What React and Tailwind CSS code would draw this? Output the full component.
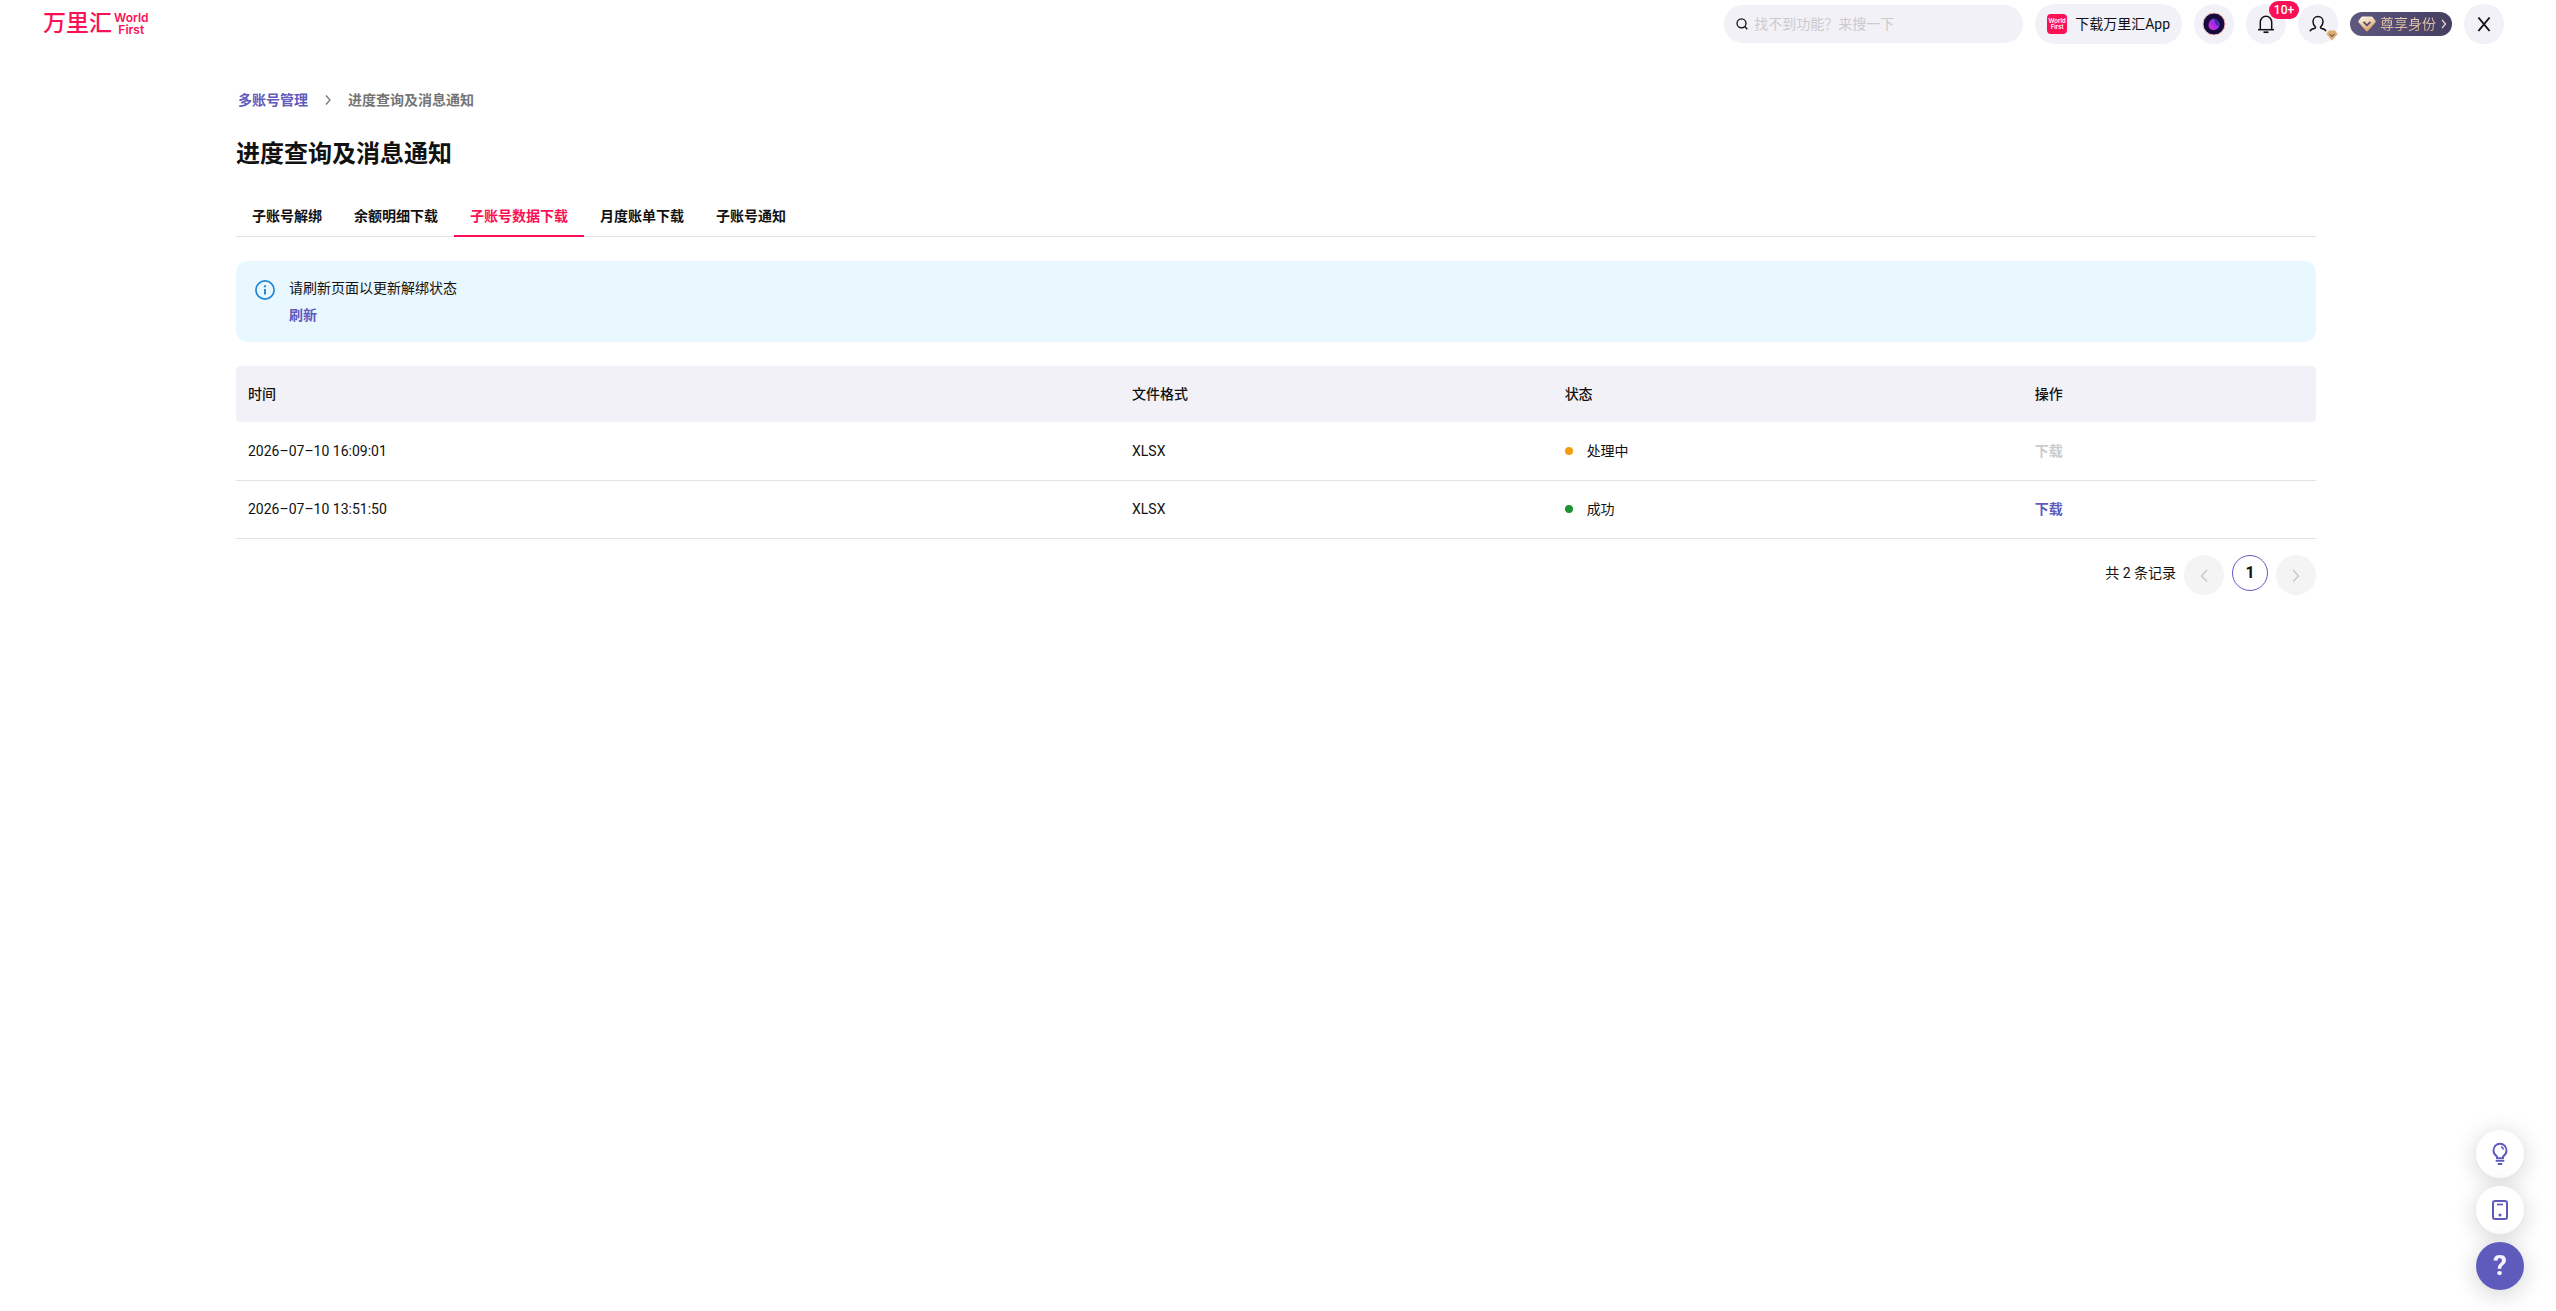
import { useState } from 'react'

const tabs = ['子账号解绑', '余额明细下载', '子账号数据下载', '月度账单下载', '子账号通知']

const records = [
  { time: '2026–07–10 16:09:01', format: 'XLSX', status: '处理中', dot: 'bg-[#f29d12]', ready: false },
  { time: '2026–07–10 13:51:50', format: 'XLSX', status: '成功', dot: 'bg-[#1d9432]', ready: true },
]

function Gem({ className }) {
  return (
    <svg viewBox="0 0 18 16" className={className} aria-hidden="true">
      <defs>
        <linearGradient id="gem" x1="0" y1="0" x2="0.4" y2="1">
          <stop offset="0" stopColor="#fffaf3" />
          <stop offset="0.5" stopColor="#f0d3ae" />
          <stop offset="1" stopColor="#d9a063" />
        </linearGradient>
      </defs>
      <path d="M4.6 .5h8.8c.5 0 .9.2 1.2.6l2.8 3.7c.4.6.4 1.3-.1 1.8l-7.4 8.5c-.5.5-1.3.5-1.8 0L.7 6.6C.2 6.1.2 5.400.6 4.800L3.400 1.100C3.700.7 4.100.5 4.600.5Z" fill="url(#gem)" />
      <path d="M5.500 5.800 9 9.300l3.500-3.500" fill="none" stroke="#504a70" strokeWidth="1.700" />
    </svg>
  )
}

function GoldGem({ className }) {
  return (
    <svg viewBox="0 0 12 11" className={className} aria-hidden="true">
      <path d="M3 .5h6L11.700 4 6 10.500.3 4 3 .5Z" fill="#dfae73" />
      <path d="M3.500 4 6 6.500 8.500 4" fill="none" stroke="#7b6250" strokeWidth="1.100" />
    </svg>
  )
}

function Logo() {
  return (
    <a href="#" aria-label="万里汇 WorldFirst" className="flex items-center gap-0.5 text-[#fc1055]">
      <span className="text-[23px] leading-6 font-medium">万里汇</span>
      <span className="flex flex-col items-center font-['Inter'] text-xs leading-3 font-semibold">
        <span>World</span>
        <span>First</span>
      </span>
    </a>
  )
}

function Header() {
  return (
    <header className="flex h-12 items-center justify-between pl-[43px] pr-[52px]">
      <Logo />
      <div className="flex items-center gap-3">
        <label className="flex h-[38px] w-[299px] items-center gap-1.5 rounded-full bg-[#f2f1f7] px-3">
          <svg viewBox="0 0 12 12" className="size-3 shrink-0" fill="none" stroke="#111" strokeWidth="1.300" aria-hidden="true">
            <circle cx="5.500" cy="5.300" r="4.500" />
            <path d="m8.700 8.500 2.600 2.800" />
          </svg>
          <input
            type="text"
            aria-label="搜索"
            placeholder="找不到功能？来搜一下"
            className="w-full bg-transparent text-sm outline-none placeholder:text-[#cbcbcb]"
          />
        </label>
        <button className="flex h-10 items-center gap-2 rounded-full bg-[#f2f1f7] px-3">
          <span className="flex size-5 flex-col items-center justify-center rounded bg-[#fc1055] font-['Inter'] text-[6px] leading-[6px] font-semibold text-white">
            <span>World</span>
            <span>First</span>
          </span>
          <span className="text-sm">下载万里汇App</span>
        </button>
        <button aria-label="助手" className="flex size-10 items-center justify-center rounded-full bg-[#f2f1f7]">
          <svg viewBox="0 0 24 24" className="size-6" aria-hidden="true">
            <defs>
              <linearGradient id="orb" x1="0" y1="1" x2="1" y2="0">
                <stop offset="0" stopColor="#f032c8" />
                <stop offset="0.5" stopColor="#a02bea" />
                <stop offset="1" stopColor="#4468f5" />
              </linearGradient>
            </defs>
            <circle cx="12" cy="12" r="11" fill="#160a3c" stroke="#f5b7b4" strokeWidth="1" />
            <path d="M6.500 13c0-3.500 2-5.500 5-6.500 3 .5 6 3 6 6.500-.5 3-2.500 4.500-5.500 5-3.500 0-5.500-2-5.500-5Z" fill="url(#orb)" />
            <path d="M12 6.500c3 1 5 3.500 4.500 7.500-2 0-4-3-4.500-7.500Z" fill="#1c1250" opacity=".55" />
          </svg>
        </button>
        <button aria-label="消息" className="relative flex size-10 items-center justify-center rounded-full bg-[#f2f1f7]">
          <svg viewBox="0 0 20 20" className="size-5" fill="none" stroke="#111" strokeWidth="1.500" aria-hidden="true">
            <path d="M4.300 15.300V8.200C4.300 4.800 6.800 2.200 10 2.200s5.700 2.600 5.700 6v7.100" />
            <path d="M2 15.700h16" />
            <path d="M7.500 18.200h5" strokeWidth="1.700" />
          </svg>
          <span className="absolute -top-[3px] left-[23px] flex h-[18px] w-[30px] items-center justify-center rounded-full bg-[#fc1055] text-xs font-medium text-white">
            10+
          </span>
        </button>
        <button aria-label="账户" className="relative flex size-10 items-center justify-center rounded-full bg-[#f2f1f7]">
          <svg viewBox="0 0 20 20" className="size-5" fill="none" stroke="#111" strokeWidth="1.500" aria-hidden="true">
            <path d="M2 17.200c.8-2 2.300-2.500 4.500-2.700.9-.1 1.300-.8.900-1.500C5.900 11.600 5 10 5 7.700 5 4.700 7.100 2.500 10 2.500s5 2.200 5 5.200c0 2.300-.9 3.900-2.400 5.300-.4.700 0 1.400.9 1.500 2.200.2 3.700.7 4.500 2.700" />
          </svg>
          <GoldGem className="absolute right-0 bottom-[3px] h-[11px] w-3" />
        </button>
        <button className="flex h-6 items-center gap-1 rounded-full bg-linear-to-r from-[#5f587f] to-[#453e61] pr-1 pl-2">
          <Gem className="h-4 w-[18px]" />
          <span className="bg-linear-to-b from-[#f3dcc6] to-[#cfa888] bg-clip-text text-sm text-transparent">尊享身份</span>
          <svg viewBox="0 0 8 10" className="h-2.5 w-2" fill="none" stroke="#f5e6da" strokeWidth="1.200" aria-hidden="true">
            <path d="m2 .8 3.500 4.200L2 9.200" />
          </svg>
        </button>
        <button aria-label="关闭" className="flex size-10 items-center justify-center rounded-full bg-[#f2f1f7]">
          <svg viewBox="0 0 20 20" className="size-5" fill="none" stroke="#111" strokeWidth="1.900" aria-hidden="true">
            <path d="M4.400 3.500 15.600 17M15.600 3.500 4.400 17" />
          </svg>
        </button>
      </div>
    </header>
  )
}

function RecordTable() {
  return (
    <table className="mt-6 w-full table-fixed text-left text-sm">
      <colgroup>
        <col className="w-[42.5%]" />
        <col className="w-[20.8%]" />
        <col className="w-[22.6%]" />
        <col className="w-[14.1%]" />
      </colgroup>
      <thead>
        <tr className="h-14 bg-[#f2f1f7]">
          <th className="rounded-l px-3 font-medium">时间</th>
          <th className="px-3 font-medium">文件格式</th>
          <th className="px-3 font-medium">状态</th>
          <th className="rounded-r px-3 font-medium">操作</th>
        </tr>
      </thead>
      <tbody>
        {records.map(r => (
          <tr key={r.time} className="h-[58px] border-b border-[#e3e3e5]">
            <td className="px-3">{r.time}</td>
            <td className="px-3">{r.format}</td>
            <td className="px-3">
              <span className="flex items-center gap-3.5">
                <span className={`size-2 rounded-full ${r.dot}`} />
                {r.status}
              </span>
            </td>
            <td className="px-3">
              <button disabled={!r.ready} className="font-bold text-[#5f5bbd] disabled:text-[#cbcbcb]">
                下载
              </button>
            </td>
          </tr>
        ))}
      </tbody>
    </table>
  )
}

function Pagination() {
  return (
    <nav aria-label="分页" className="mt-4 flex items-start justify-end gap-2 text-sm">
      <span className="leading-9">共 2 条记录</span>
      <button disabled aria-label="上一页" className="flex size-10 items-center justify-center rounded-full bg-[#f4f4f4]">
        <svg viewBox="0 0 12 14" className="h-3.5 w-3" fill="none" stroke="#c8c8c8" strokeWidth="1.500" aria-hidden="true">
          <path d="M9 2 3.500 8 9 13.500" />
        </svg>
      </button>
      <button aria-current="page" className="size-9 rounded-full border border-[#5f5bbd] text-base font-bold">1</button>
      <button disabled aria-label="下一页" className="flex size-10 items-center justify-center rounded-full bg-[#f4f4f4]">
        <svg viewBox="0 0 12 14" className="h-3.5 w-3" fill="none" stroke="#c8c8c8" strokeWidth="1.500" aria-hidden="true">
          <path d="m3 2 5.500 6L3 13.500" />
        </svg>
      </button>
    </nav>
  )
}

function FloatingTools() {
  return (
    <div className="fixed right-8 bottom-[21px] flex flex-col gap-2">
      <button aria-label="建议" className="flex size-12 items-center justify-center rounded-full bg-white shadow-[0_4px_24px_rgba(0,0,0,0.18)]">
        <svg viewBox="0 0 24 24" className="size-6" fill="none" stroke="#5f5bbd" strokeWidth="1.900" aria-hidden="true">
          <path d="M9 16.200v-1.700c-2-1.300-3.500-3.300-3.500-6C5.500 4.500 8.300 1.700 12 1.700s6.500 2.800 6.500 6.800c0 2.700-1.500 4.700-3.500 6v1.700Z" />
          <path d="M13 4.800c1.500.4 2.300 1.400 2.500 2.900" strokeWidth="1.500" />
          <path d="M7.700 18.900h8.600M9.800 22h4.400" />
        </svg>
      </button>
      <button aria-label="手机版" className="flex size-12 items-center justify-center rounded-full bg-white shadow-[0_4px_24px_rgba(0,0,0,0.18)]">
        <svg viewBox="0 0 24 24" className="size-6" fill="none" stroke="#5f5bbd" strokeWidth="2" aria-hidden="true">
          <rect x="5" y="3" width="14" height="18" rx="2" />
          <path d="M9 6.500h6" strokeWidth="1.700" />
          <circle cx="12" cy="17" r="1.500" fill="#5f5bbd" stroke="none" />
        </svg>
      </button>
      <button aria-label="帮助" className="flex size-12 items-center justify-center rounded-full bg-[#5f5bbd] text-[28px] font-bold text-[#f5f4ff] shadow-[0_4px_24px_rgba(0,0,0,0.18)]">
        ?
      </button>
    </div>
  )
}

export default function App() {
  const [active, setActive] = useState(2)

  return (
    <div className="min-h-screen bg-white font-['Roboto','Noto_Sans_CJK_SC',sans-serif] text-[#111]">
      <Header />
      <main className="pt-10 pr-60 pl-[236px]">
        <nav aria-label="面包屑" className="flex h-6 items-center gap-4 pl-0.5 text-sm font-bold">
          <a href="#" className="text-[#5f5bbd]">多账号管理</a>
          <svg viewBox="0 0 8 12" className="h-3 w-2" fill="none" stroke="#777" strokeWidth="1.300" aria-hidden="true">
            <path d="m2 1.500 4 4.500-4 4.500" />
          </svg>
          <span className="text-[#757575]">进度查询及消息通知</span>
        </nav>
        <h1 className="mt-6 text-2xl leading-9 font-bold">进度查询及消息通知</h1>

        <div role="tablist" className="mt-6 flex border-b border-[#e3e3e5]">
          {tabs.map((t, i) => (
            <button
              key={t}
              role="tab"
              aria-selected={i === active}
              onClick={() => setActive(i)}
              className={`-mb-px h-[41px] border-b-2 px-4 text-sm font-bold ${
                i === active ? 'border-[#fc1055] text-[#fc1055]' : 'border-transparent'
              }`}
            >
              {t}
            </button>
          ))}
        </div>

        <section className="mt-6 flex gap-3.5 rounded-xl bg-[#e9f7ff] px-[19px] pt-3.5 pb-[13px]">
          <svg viewBox="0 0 20 20" className="mt-[5px] size-5" fill="none" stroke="#1d87d8" strokeWidth="1.700" aria-hidden="true">
            <circle cx="10" cy="10" r="9.100" />
            <path d="M10 9v5.500M10 5.300v2" strokeWidth="1.900" />
          </svg>
          <div className="text-sm">
            <p className="leading-[27px]">请刷新页面以更新解绑状态</p>
            <button className="leading-[27px] font-bold text-[#5f5bbd]">刷新</button>
          </div>
        </section>

        <RecordTable />
        <Pagination />
      </main>
      <FloatingTools />
    </div>
  )
}
